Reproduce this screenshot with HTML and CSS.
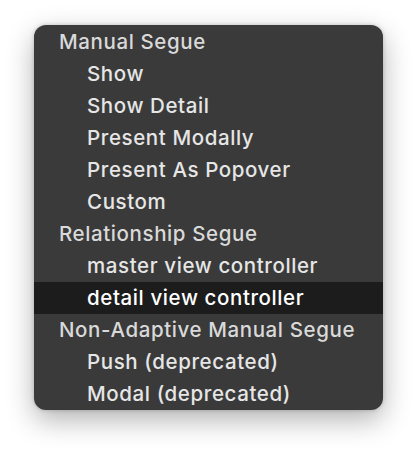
FILE: index.html
```html
<!DOCTYPE html>
<html>
<head>
<meta charset="utf-8">
<link rel="stylesheet" href="styles.css">
</head>
<body>
<div class="menu">
  <div class="row header">Manual Segue</div>
  <div class="row item">Show</div>
  <div class="row item">Show Detail</div>
  <div class="row item">Present Modally</div>
  <div class="row item">Present As Popover</div>
  <div class="row item">Custom</div>
  <div class="row header">Relationship Segue</div>
  <div class="row item">master view controller</div>
  <div class="row item selected">detail view controller</div>
  <div class="row header">Non-Adaptive Manual Segue</div>
  <div class="row item">Push (deprecated)</div>
  <div class="row item">Modal (deprecated)</div>
</div>
</body>
</html>
```
FILE: styles.css
```css
html, body {
  margin: 0;
  padding: 0;
  background: #ffffff;
}
body {
  box-sizing: border-box;
  min-height: 452px;
  padding: 25px 0 0 34px;
}
.menu {
  width: 349px;
  padding: 1px 0 0;
  background: #3a3a3a;
  border-radius: 12px;
  box-shadow: 0 10px 28px rgba(0,0,0,0.3), 0 0 4px rgba(0,0,0,0.2);
  overflow: hidden;
  font-family: Inter, "Open Sans", sans-serif;
  font-size: 20.5px;
  font-weight: 500;
  letter-spacing: 0.6px;
}
.row {
  height: 32px;
  line-height: 32px;
  white-space: nowrap;
}
.header {
  padding-left: 25px;
  color: #d9d9d9;
}
.item {
  padding-left: 53px;
  color: #e6e6e6;
}
.selected {
  background: #1c1c1c;
  color: #ffffff;
}
```
